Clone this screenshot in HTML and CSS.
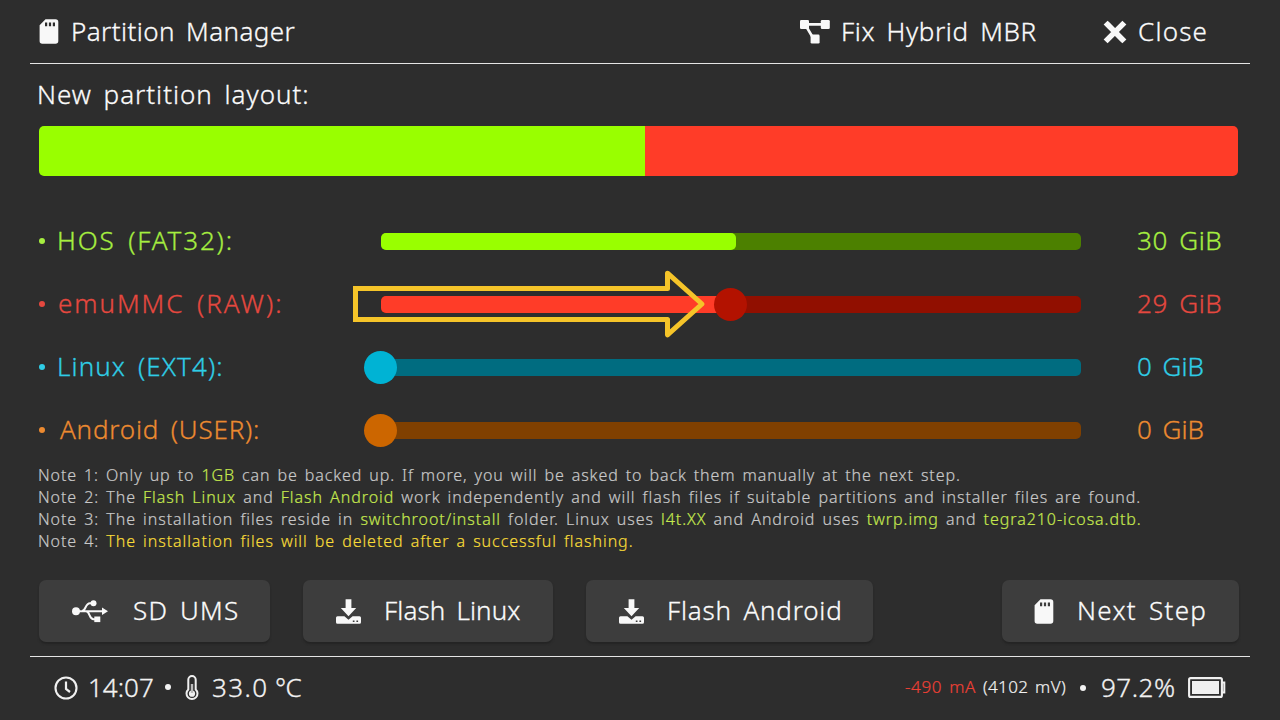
FILE: index.html
```html
<!DOCTYPE html>
<html lang="en">
<head>
<meta charset="utf-8">
<title>Partition Manager</title>
<link rel="stylesheet" href="styles.css">
</head>
<body>
<svg class="defs" aria-hidden="true">
  <symbol id="sd" viewBox="0 0 20 25"><path fill-rule="evenodd" d="M6.5.3H16.5Q19.3.3 19.3 3V22Q19.3 24.7 16.5 24.7H3.3Q.6 24.7.6 22V6.2ZM6 3.5V7.3H8.2V3.5ZM9.9 3.5V7.3H12.1V3.5ZM13.8 3.5V7.3H16V3.5Z"/></symbol>
  <symbol id="flash" viewBox="0 0 25 25"><path fill-rule="evenodd" d="M9.6.3H15.4V9H20.2L12.5 17.2 4.8 9H9.6ZM1.5 17.2H8.4L12.5 20.8 16.6 17.2H23.5Q25 17.2 25 18.7V23.2Q25 24.7 23.5 24.7H1.5Q0 24.7 0 23.2V18.7Q0 17.2 1.5 17.2ZM16.8 21.4V23H18.5V21.4ZM20.4 21.4V23H22.1V21.4Z"/></symbol>
</svg>
<header class="header">
  <svg class="icon-sd"><use href="#sd"/></svg>
  <h1 class="title">Partition Manager</h1>
  <svg class="icon-branch" viewBox="0 0 30 24"><path d="M8 4.4H21M6 6L12.5 17" stroke="#f8f8f8" stroke-width="2.6" fill="none"/><rect width="9" height="9" rx="1.3"/><rect x="20.8" width="9" height="9" rx="1.3"/><rect x="10.6" y="14.6" width="9" height="9" rx="1.3"/></svg>
  <span class="fix">Fix Hybrid MBR</span>
  <svg class="icon-close" viewBox="0 0 22 22"><path d="M3.6 3.6L18.4 18.4M18.4 3.6L3.6 18.4" stroke="#f8f8f8" stroke-width="5.6" stroke-linecap="square"/></svg>
  <span class="close">Close</span>
</header>
<main class="main">
  <h2 class="layout-title">New partition layout:</h2>
  <div class="layout-bar"><div class="part-hos"></div><div class="part-emu"></div></div>
  <section class="sliders">
    <div class="row hos"><i class="dot"></i><span class="label">HOS (FAT32):</span><div class="track"><div class="fill"></div></div><span class="value">30 GiB</span></div>
    <div class="row emu"><i class="dot"></i><span class="label">emuMMC (RAW):</span><div class="track"><div class="fill"></div><i class="knob"></i>
      <svg class="arrow" viewBox="0 0 356 68"><path d="M316.5 18.5H4.5V49.5H316.5"/><path stroke-linejoin="round" d="M312 18.5H316.5V3.2L351 34 316.5 64.8V49.5H312"/></svg></div><span class="value">29 GiB</span></div>
    <div class="row linux"><i class="dot"></i><span class="label">Linux (EXT4):</span><div class="track"><i class="knob"></i></div><span class="value">0 GiB</span></div>
    <div class="row android"><i class="dot"></i><span class="label">Android (USER):</span><div class="track"><i class="knob"></i></div><span class="value">0 GiB</span></div>
  </section>
  <section class="notes">
    <p class="note-backup">Note 1: Only up to <b>1GB</b> can be backed up. If more, you will be asked to back them manually at the next step.</p>
    <p>Note 2: The <b>Flash Linux</b> and <b>Flash Android</b> work independently and will flash files if suitable partitions and installer files are found.</p>
    <p>Note 3: The installation files reside in <b>switchroot/install</b> folder. Linux uses <b>l4t.XX</b> and Android uses <b>twrp.img</b> and <b>tegra210-icosa.dtb.</b></p>
    <p>Note 4: <em>The installation files will be deleted after a successful flashing.</em></p>
  </section>
  <nav class="buttons">
    <div class="button ums"><svg class="icon-usb" viewBox="0 0 36 24"><circle cx="4" cy="12.2" r="4"/><circle cx="21.5" cy="4.3" r="3"/><rect x="22.3" y="17.5" width="6" height="5.6"/><path d="M30 8.4L36 12.2 30 16Z"/><path d="M3 12.2H31M10 12C14 12 13 4.3 18 4.3H21M14 12.2C18 12.2 17 20.2 21.5 20.2H23" fill="none" stroke="#f8f8f8" stroke-width="2"/></svg><span>SD UMS</span></div>
    <div class="button flash-linux"><svg class="icon-flash"><use href="#flash"/></svg><span>Flash Linux</span></div>
    <div class="button flash-android"><svg class="icon-flash"><use href="#flash"/></svg><span>Flash Android</span></div>
    <div class="button next"><svg class="icon-sd"><use href="#sd"/></svg><span>Next Step</span></div>
  </nav>
</main>
<footer class="footer">
  <svg class="icon-clock" viewBox="0 0 24 24"><circle cx="12" cy="12" r="10.5" fill="none" stroke="#f0f0f0" stroke-width="2.1"/><path d="M12 5.5V13L16 16" fill="none" stroke="#f0f0f0" stroke-width="2.2"/></svg>
  <span class="time">14:07</span><i class="dot"></i>
  <svg class="icon-temp" viewBox="0 0 14 26"><path d="M3.3 14.5V4.8A3.7 3.7 0 0 1 10.7 4.8V14.5A5.5 5.5 0 1 1 3.3 14.5Z" fill="none" stroke="#f0f0f0" stroke-width="2"/><circle cx="7" cy="18.7" r="3.1"/><path d="M7 9V18" stroke="#bbb" stroke-width="2.4"/></svg>
  <span class="temp">33.0</span><span class="unit">°C</span>
  <span class="current">-490 mA</span><span class="voltage">(4102 mV)</span><i class="dot"></i><span class="percent">97.2%</span>
  <svg class="icon-battery" viewBox="0 0 38 22"><rect x="1.1" y="1.1" width="32.8" height="18.8" rx="1.5" fill="none" stroke="#f0f0f0" stroke-width="2.1"/><rect x="4" y="4" width="27" height="13"/><path d="M34 5.5H36.3V15.5H34" fill="none" stroke="#f0f0f0" stroke-width="2"/></svg>
</footer>
</body>
</html>
```
FILE: styles.css
```css
* { box-sizing: border-box; }
body {
  margin: 0; width: 1280px; height: 720px; overflow: hidden;
  background: #2d2d2d; color: #fbfbfb;
  font: 300 26px/36px "Noto Sans", sans-serif;
  word-spacing: 4px;
  -webkit-text-stroke: .3px currentColor;
}
svg { display: block; flex: none; fill: #f8f8f8; overflow: visible; }
.defs { position: absolute; width: 0; height: 0; }
h1, h2, p { margin: 0; font: inherit; }
span, h1, h2, p { flex: none; white-space: nowrap; }
i { display: block; flex: none; }
b { font-weight: 300; color: #c5e84e; -webkit-text-stroke-color: #c5e84e; }
em { font-style: normal; color: #f8dc38; -webkit-text-stroke-color: #f8dc38; }
.icon-sd { width: 20px; height: 25px; }
.dot { width: 6px; height: 6px; border-radius: 50%; background: currentColor; }

.header { display: flex; align-items: center; height: 64px; margin: 0 30px; padding: 0 0 0 9px; border-bottom: 1px solid #e4e4e4; }
.title { width: 741px; padding-left: 12px; margin-top: -2px; letter-spacing: .42px; }
.icon-branch { width: 30px; height: 24px; }
.fix { width: 274px; padding-left: 11px; margin-top: -2px; letter-spacing: .62px; }
.icon-close { width: 22px; height: 22px; }
.close { padding-left: 12px; margin-top: -2px; letter-spacing: 1.2px; }

.main { height: 592px; padding: 12px 42px 0 39px; }
.layout-title { height: 36px; margin-left: -2px; letter-spacing: .98px; line-height: 37px; }
.layout-bar { display: flex; height: 50px; margin-top: 14px; border-radius: 5px; overflow: hidden; }
.part-hos { width: 606px; background: #9f0; }
.part-emu { flex: 1; background: #ff3c28; }

.sliders { padding-top: 34px; }
.row { display: flex; align-items: center; height: 63px; }
.label { width: 336px; padding-left: 12px; }
.label, .value { margin-top: -3px; }
.dot { margin-top: -1px; }
.track { position: relative; flex: none; width: 700px; height: 17px; border-radius: 5px; }
.fill { height: 17px; border-radius: 5px; }
.knob { position: absolute; top: -8px; left: -17px; width: 33px; height: 33px; border-radius: 50%; }
.value { padding-left: 56px; letter-spacing: .6px; }
.hos { color: #a6ee40; }
.hos .label { letter-spacing: 1.85px; }
.hos .track { background: #4c8000; }
.hos .fill { width: 355px; background: #9f0; }
.emu { color: #e5483f; }
.emu .label { padding-left: 13px; letter-spacing: 1.96px; }
.emu .track { background: #910f00; }
.emu .fill { width: 350px; background: #ff3c28; }
.emu .knob { left: 333px; background: #b31200; }
.linux { color: #2fcde6; }
.linux .label { letter-spacing: 1.1px; }
.linux .track { background: #006c80; }
.linux .knob { background: #00b3d4; }
.android { color: #ec8a30; }
.android .label { padding-left: 15px; letter-spacing: .81px; }
.android .track { background: #804000; }
.android .knob { background: #cc6600; }
.linux .value, .android .value { letter-spacing: 0; }
.arrow { position: absolute; left: -30px; top: -26px; width: 356px; height: 68px; }
.arrow path { fill: none; stroke: #f5c429; stroke-width: 5; }

.notes { height: 88px; margin: 2px 0 0 -1px; color: #c8c8c8; font-size: 16px; line-height: 22px; letter-spacing: .94px; word-spacing: 2px; -webkit-text-stroke: .2px currentColor; }
.note-backup { letter-spacing: .9px; }

.buttons { display: flex; margin-top: 28px; }
.button { display: flex; align-items: center; height: 62px; padding-left: 33px; border-radius: 7px; background: #3d3d3d; box-shadow: 0 2px 2px #242424; }
.button span { margin-top: -3px; }
.icon-usb { width: 36px; height: 24px; }
.icon-flash { width: 25px; height: 25px; }
.ums { width: 231px; margin-right: 33px; letter-spacing: 1.2px; }
.ums span { padding-left: 25px; }
.flash-linux { width: 250px; margin-right: 33px; letter-spacing: .13px; }
.flash-android { width: 287px; letter-spacing: .8px; }
.flash-linux span, .flash-android span { padding-left: 23px; }
.next { width: 237px; margin-left: auto; margin-right: -1px; padding-left: 32px; letter-spacing: 1.3px; }
.next span { padding-left: 23px; }

.footer { display: flex; align-items: center; height: 64px; margin: 0 30px; padding: 0 0 2px 24px; border-top: 1px solid #e4e4e4; color: #f2f2f2; }
.footer svg { fill: #f0f0f0; }
.icon-clock { width: 24px; height: 24px; }
.time { width: 87px; padding-left: 10px; margin-top: -2px; letter-spacing: 0; }
.icon-temp { width: 14px; height: 26px; margin-left: 14px; }
.temp { width: 76px; padding-left: 13px; margin-top: -2px; letter-spacing: 1.4px; }
.unit { margin-top: -2px; letter-spacing: -.6px; }
.current { margin-left: auto; }
.current, .voltage { font-size: 17px; word-spacing: 2px; margin-top: -2px; -webkit-text-stroke-width: .2px; }
.current { color: #ee4035; -webkit-text-stroke-color: #ee4035; letter-spacing: .63px; }
.voltage { margin-left: 7px; letter-spacing: .36px; }
.voltage + .dot { margin: 0 15px 0 14px; }
.percent { width: 75px; margin-top: -2px; letter-spacing: .5px; }
.icon-battery { width: 38px; height: 22px; margin: 0 24px 0 12px; }
.row .label, .row .value { -webkit-text-stroke-color: currentColor; }
```
